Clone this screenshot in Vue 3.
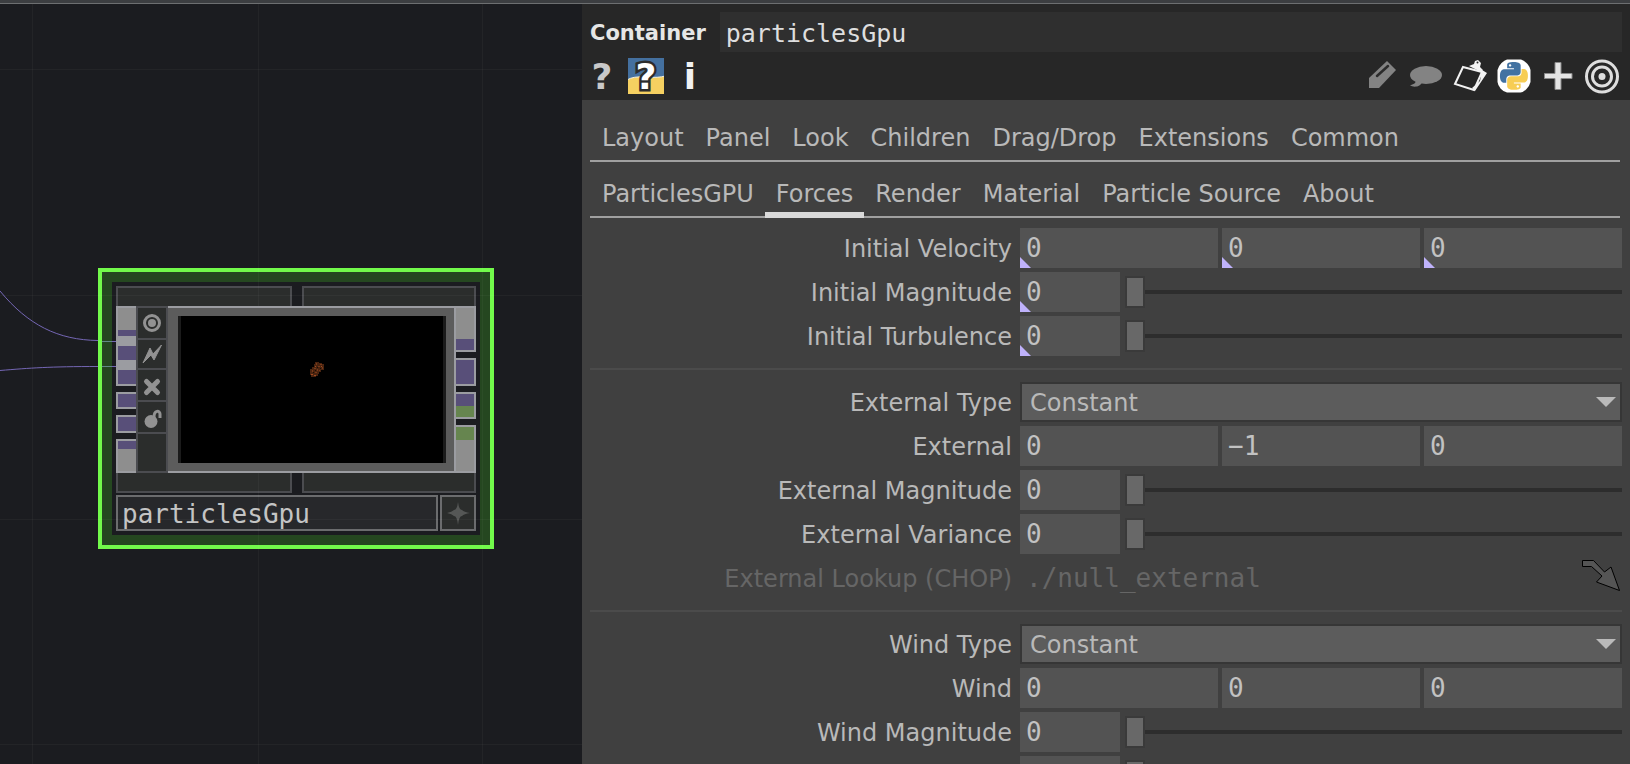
<script setup>
import { ref } from 'vue'

const pageTabs = ['Layout', 'Panel', 'Look', 'Children', 'Drag/Drop', 'Extensions', 'Common']
const customTabs = ['ParticlesGPU', 'Forces', 'Render', 'Material', 'Particle Source', 'About']
const activeTab = ref('Forces')
const opName = ref('particlesGpu')

const groups = ref([
  [
    { id: 'initvel', label: 'Initial Velocity', type: 'vector', values: ['0', '0', '0'], exported: true },
    { id: 'initmag', label: 'Initial Magnitude', type: 'slider', value: 0, exported: true },
    { id: 'initturb', label: 'Initial Turbulence', type: 'slider', value: 0, exported: true }
  ],
  [
    { id: 'exttype', label: 'External Type', type: 'menu', value: 'Constant' },
    { id: 'ext', label: 'External', type: 'vector', values: ['0', '−1', '0'] },
    { id: 'extmag', label: 'External Magnitude', type: 'slider', value: 0 },
    { id: 'extvar', label: 'External Variance', type: 'slider', value: 0 },
    { id: 'extchop', label: 'External Lookup (CHOP)', type: 'path', value: './null_external' }
  ],
  [
    { id: 'windtype', label: 'Wind Type', type: 'menu', value: 'Constant' },
    { id: 'wind', label: 'Wind', type: 'vector', values: ['0', '0', '0'] },
    { id: 'windmag', label: 'Wind Magnitude', type: 'slider', value: 0 },
    { id: 'windvar', label: 'Wind Variance', type: 'slider', value: 0 }
  ]
])

const pythonPath =
  'M14.25.18l.9.2.73.26.59.3.45.32.34.34.25.34.16.33.1.3.04.26.02.2-.01.13V8.5l-.05.63-.13.55-.21.46-.26.38-.3.31-.33.25-.35.19-.35.14-.33.1-.3.07-.26.04-.21.02H8.77l-.69.05-.59.14-.5.22-.41.27-.33.32-.27.35-.2.36-.15.37-.1.35-.07.32-.04.27-.02.21v3.06H3.17l-.21-.03-.28-.07-.32-.12-.35-.18-.36-.26-.36-.36-.35-.46-.32-.59-.28-.73-.21-.88-.14-1.05-.05-1.23.06-1.22.16-1.04.24-.87.32-.71.36-.57.4-.44.42-.33.42-.24.4-.16.36-.1.32-.05.24-.01h.16l.06.01h8.16v-.83H6.18l-.01-2.75-.02-.37.05-.34.11-.31.17-.28.25-.26.31-.23.38-.2.44-.18.51-.15.58-.12.64-.1.71-.06.77-.04.84-.02 1.27.05zm-6.3 1.98l-.23.33-.08.41.08.41.23.34.33.22.41.09.41-.09.33-.22.23-.34.08-.41-.08-.41-.23-.33-.33-.22-.41-.09-.41.09z'
</script>

<template>
  <div class="app">
    <div class="topbar"></div>
    <div class="workspace">
      <main class="network" aria-label="Network editor">
        <svg class="wires" width="582" height="760" viewBox="0 4 582 760" fill="none" aria-hidden="true">
          <path d="M0 291C28 325 58 340 98 340.500M0 370.500C30 368 50 366.500 98 366.500" stroke="#7466b4" />
        </svg>
        <section class="node" aria-label="particlesGpu node">
          <svg class="wire-ends" width="14" height="80" viewBox="0 0 14 80" aria-hidden="true">
            <path d="M0 23.500H10M0 48.500H10" stroke="#628a88" />
            <path d="M10 23.500H14M10 48.500H14" stroke="#7466b4" />
          </svg>
          <div class="slots top"><i></i><i></i></div>
          <div class="node-main">
            <svg class="conn" width="20" height="167" viewBox="0 0 20 167" aria-hidden="true">
              <path fill="#9b9ca1" d="M0 0h20v80H0zM0 86h20v17H0zM0 109h20v18H0zM0 133h20v34H0z" />
              <path fill="#8e8e8e" d="M2 2h18v22H2zM2 143h18v22H2z" />
              <path fill="#584f79" d="M2 24h18v6H2zM2 40h18v14H2zM2 64h18v14H2zM2 88h18v13H2zM2 111h18v14H2zM2 135h18v8H2z" />
            </svg>
            <div class="flags">
              <button type="button" aria-label="Viewer active">
                <svg viewBox="0 0 28 28" width="28" height="28"><circle cx="14" cy="14" r="7.500" fill="none" stroke="#929292" stroke-width="3" /><circle cx="14" cy="14" r="4" fill="#929292" /></svg>
              </button>
              <button type="button" aria-label="Bypass">
                <svg viewBox="0 0 28 28" width="28" height="28"><path fill="#929292" stroke="#929292" d="M23.500 5 16 20l-3-5-8 8 7-15 3 6z" /></svg>
              </button>
              <button type="button" aria-label="Lock cook">
                <svg viewBox="0 0 28 28" width="28" height="28"><path d="m8.500 10.500 11 11m0-11-11 11" stroke="#929292" stroke-width="5" stroke-linecap="round" /></svg>
              </button>
              <button type="button" aria-label="Lock">
                <svg viewBox="0 0 28 28" width="28" height="28"><circle cx="13" cy="18.500" r="6.500" fill="#929292" /><path d="M16 14c0-7 6-7 6-3v4" fill="none" stroke="#929292" stroke-width="3" /></svg>
              </button>
              <span></span>
            </div>
            <div class="viewer">
              <div class="screen">
                <svg class="particles" width="16" height="18" viewBox="0 0 16 18" aria-hidden="true">
                  <path fill="#4a2410" d="M6 2h4v1h3v1h2v6h-3v2h-2v2H9v2H7v1H2v-2H1V9h2V7h2V4h1z" />
                  <path fill="#7a3a18" d="M7 3h1v2H7zM11 4h2v1h-2zM9 6h2v1H9zM13 7h1v2h-1zM5 8h2v1H5zM8 9h1v2H8zM3 10h1v2H3zM6 12h2v1H6zM10 10h1v1h-1z" />
                  <path fill="#a04a22" d="M2 14h2v1H2zM5 15h2v1H5zM12 6h1v1h-1zM6 6h1v1H6z" />
                  <path fill="#1c0d05" d="M8 7h1v1H8zM4 12h1v1H4zM11 8h1v1h-1zM6 10h1v1H6z" />
                </svg>
              </div>
            </div>
            <svg class="conn" width="22" height="167" viewBox="0 0 22 167" aria-hidden="true">
              <path fill="#9b9ca1" d="M0 0h22v46H0zM0 46h2v121H0zM2 52h20v28H2zM2 86h20v27H2zM2 119h20v48H2z" />
              <path fill="#8e8e8e" d="M2 2h18v31H2zM2 134h18v31H2z" />
              <path fill="#584f79" d="M2 33h18v11H2zM2 54h18v24H2zM2 88h18v12H2z" />
              <path fill="#66854f" d="M2 100h18v11H2zM2 121h18v13H2z" />
            </svg>
          </div>
          <div class="slots bottom"><i></i><i></i></div>
          <div class="node-foot">
            <div class="node-name">particlesGpu</div>
            <button type="button" class="star" aria-label="Display flag">
              <svg viewBox="0 0 32 32" width="32" height="32"><path fill="#555756" d="M16 5Q17 13 20 13 22 15 28 16 22 17 20 19 17 19 16 28 15 19 12 19 10 17 5 16 10 15 12 13 15 13 16 5z" /></svg>
            </button>
          </div>
        </section>
        <svg class="grid" width="582" height="760" viewBox="0 4 582 760" aria-hidden="true">
          <path d="M32.500 4V764M258.500 4V764M482.500 4V764M0 69.500H582M0 295.500H582M0 519.500H582M0 744.500H582" stroke="#fff" stroke-opacity=".035" />
        </svg>
      </main>

      <aside class="params">
        <header class="head">
          <div class="title-row">
            <label for="op-name">Container</label>
            <input id="op-name" v-model="opName" type="text" spellcheck="false" />
          </div>
          <div class="tools">
            <div class="tool-set">
              <button type="button" class="glyph dim" aria-label="Help">?</button>
              <button type="button" class="glyph py" aria-label="Python help">
                <svg class="py-bg" viewBox="0 0 36 36" width="36" height="36" aria-hidden="true">
                  <path fill="#44709f" d="M0 0h36v36H0z" />
                  <path fill="#f5d061" stroke="#f4f0e0" stroke-width="1" d="M-1 22Q5 18 18 19T37 18V37H-1z" />
                </svg>
                <span>?</span>
              </button>
              <button type="button" class="glyph" aria-label="Info">i</button>
            </div>
            <div class="tool-set">
              <button type="button" aria-label="Edit">
                <svg viewBox="0 0 36 36" width="36" height="36"><path fill="#838383" d="M5 20 23 3l9 9-17 18H5z" /><path d="M13 18 24 8" stroke="#2b2b2b" stroke-width="2.500" stroke-linecap="round" /></svg>
              </button>
              <button type="button" aria-label="Comment">
                <svg viewBox="0 0 36 36" width="36" height="36"><ellipse cx="18" cy="17" rx="16" ry="9" fill="#838383" /><path fill="#838383" d="M8 20c1 5-3 7-6 7 3 3 11 2 12-3z" /></svg>
              </button>
              <button type="button" aria-label="Copy parameters">
                <svg viewBox="0 0 36 36" width="36" height="36"><path d="M11 9 30 14 22 32 3 26z" fill="#262626" stroke="#f2f2f2" stroke-width="2" /><path fill="#f2f2f2" d="m30 12 5 3-12 18-3-3 8-7zM17 8l5-2 1-3 3-1 3 3-1 4 3 3-2 2z" /><circle cx="25.500" cy="4.500" r="1" fill="#262626" /></svg>
              </button>
              <button type="button" aria-label="Python mode">
                <svg viewBox="0 0 36 36" width="36" height="36">
                  <path fill="#fff" d="M11 1.500h14q4 1.500 6.500 4.500t3 6v12q-1 4-4 7t-6 3.500H11q-4-1-6.500-4T1.500 24V12q1-4 4-7T11 1.500z" />
                  <g transform="translate(4 4) scale(1.160)"><path :d="pythonPath" fill="#4272a2" /><path :d="pythonPath" fill="#f7cd54" transform="rotate(180 12 12)" /></g>
                </svg>
              </button>
              <button type="button" aria-label="Add parameter">
                <svg viewBox="0 0 36 36" width="36" height="36"><path fill="#e4e4e4" stroke="#8a8a8a" d="M15 4.500h6v11h11v5H21v11h-6v-11H4.500v-5H15z" /></svg>
              </button>
              <button type="button" aria-label="Target">
                <svg viewBox="0 0 36 36" width="36" height="36" fill="none" stroke="#dedede" stroke-width="3"><circle cx="18" cy="18.500" r="15.500" /><circle cx="18" cy="18.500" r="9.500" /><circle cx="18" cy="18.500" r="3.500" fill="#dedede" stroke="none" /></svg>
              </button>
            </div>
          </div>
        </header>

        <div class="body">
          <nav class="tabs">
            <button v-for="t in pageTabs" :key="t" type="button" :class="{ active: t === activeTab }" @click="activeTab = t">{{ t }}</button>
          </nav>
          <nav class="tabs">
            <button v-for="t in customTabs" :key="t" type="button" :class="{ active: t === activeTab }" @click="activeTab = t">{{ t }}</button>
          </nav>

          <div class="groups">
            <section v-for="(g, gi) in groups" :key="gi" class="group">
              <div v-for="p in g" :key="p.id" class="row" :class="{ disabled: p.type === 'path' }">
                <label :for="p.id">{{ p.label }}</label>
                <div v-if="p.type === 'vector'" class="control">
                  <span v-for="(v, i) in p.values" :key="i" class="cell" :class="{ exported: p.exported }">
                    <input :id="i ? p.id + i : p.id" v-model="p.values[i]" type="text" :aria-label="p.label + ' ' + (i + 1)" />
                  </span>
                </div>
                <div v-else-if="p.type === 'slider'" class="control">
                  <span class="cell single" :class="{ exported: p.exported }">
                    <input :id="p.id" v-model="p.value" type="text" />
                  </span>
                  <input v-model="p.value" class="range" type="range" min="0" max="1" step="0.01" :aria-label="p.label + ' slider'" />
                </div>
                <div v-else-if="p.type === 'menu'" class="control menu">
                  <select :id="p.id" v-model="p.value"><option>Constant</option></select>
                  <svg width="20" height="10" viewBox="0 0 20 10" aria-hidden="true"><path fill="#bababa" d="M0 0h20L10 10z" /></svg>
                </div>
                <div v-else class="control">
                  <input :id="p.id" class="path" type="text" :value="p.value" disabled />
                  <button type="button" class="jump" aria-label="Go to operator">
                    <svg width="42" height="36" viewBox="0 0 42 36"><path fill="#555" stroke="#000" d="M2.500 2.500h11l11 11.500 6.500-5 8.500 23.500-23-8.500 5.500-6L11.500 8.500h-9z" /></svg>
                  </button>
                </div>
              </div>
            </section>
          </div>
        </div>
      </aside>
    </div>
  </div>
</template>

<style>
body {
  background: #1b1c20;
}
</style>

<style scoped>
.app {
  display: flex;
  flex-direction: column;
  height: 100vh;
  overflow: hidden;
  font-family: Verdana, "DejaVu Sans", sans-serif;
  font-size: 24px;
  line-height: 28px;
  color: #b9b9b9;
}
.app * {
  box-sizing: border-box;
}
button,
input,
select {
  margin: 0;
  padding: 0;
  border: 0;
  border-radius: 0;
  outline: 0;
  background: none;
  color: inherit;
  font: inherit;
  appearance: none;
}
button {
  cursor: pointer;
}
svg {
  display: block;
}
.topbar {
  flex: none;
  height: 4px;
  background: #3c3e41;
  border-bottom: 1px solid #6d6f71;
}
.workspace {
  display: flex;
  flex: 1;
  min-height: 0;
}

.network {
  position: relative;
  flex: 582 1 0;
  min-width: 0;
  overflow: hidden;
  background: #1b1c20;
}
.wires,
.grid {
  position: absolute;
  top: 0;
  left: 0;
  pointer-events: none;
}
.node {
  position: absolute;
  left: 98px;
  top: 264px;
  display: flex;
  flex-direction: column;
  width: 396px;
  padding: 14px;
  border: 4px solid #72fa4b;
  background: #1b1c20;
  box-shadow: inset 0 0 0 10px #254720;
}
.wire-ends {
  position: absolute;
  left: 0;
  top: 46px;
}
.slots {
  display: flex;
  gap: 10px;
  height: 20px;
}
.slots i {
  flex: 1;
  border: 2px solid #4b4c50;
  background: #2b2d2c;
}
.slots i:first-child {
  flex: 0 0 176px;
}
.slots.top i {
  border-bottom: 0;
}
.slots.bottom i {
  border-top: 0;
}
.node-main {
  display: flex;
  height: 167px;
}
.conn {
  flex: none;
}
.flags {
  display: grid;
  grid-template-rows: 30px 28px 30px 30px 1fr;
  gap: 2px;
  width: 32px;
  flex: none;
  padding: 2px;
  background: #4b4c50;
}
.flags button,
.flags span {
  display: flex;
  align-items: center;
  justify-content: center;
  background: #2b2d2c;
}
.viewer {
  z-index: 1;
  flex: 1;
  padding: 8px 8px 8px 10px;
  border: solid #9b9ca1;
  border-width: 2px 0;
  background: #5c5c5c;
}
.screen {
  position: relative;
  height: 100%;
  border: solid #1b1b1b;
  border-width: 0 3px;
  background: #000;
}
.particles {
  position: absolute;
  left: 49%;
  top: 44px;
}
.node-foot {
  display: flex;
  gap: 2px;
  margin-top: 2px;
}
.node-name {
  flex: 1;
  height: 36px;
  padding-left: 4px;
  border: 2px solid #6b6c6e;
  background: #27282b;
  color: #c4c4c4;
  font-family: "DejaVu Sans Mono", monospace;
  font-size: 26px;
  line-height: 34px;
}
.star {
  width: 36px;
  height: 36px;
  border: 2px solid #6b6c6e;
  background: #2b2d2c;
}

.params {
  display: flex;
  flex-direction: column;
  flex: 1048 1 0;
  min-width: 0;
  background: #404040;
}
.head {
  flex: none;
  height: 96px;
  padding-top: 8px;
  background: #272727;
}
.title-row {
  display: flex;
  align-items: center;
  gap: 14px;
  padding: 0 8px;
}
.title-row label {
  padding-top: 2px;
  color: #e6e6e6;
  font-size: 21px;
  font-weight: bold;
}
.title-row input {
  flex: 1;
  min-width: 0;
  height: 40px;
  padding: 2px 0 0 6px;
  background: #2f2f2f;
  color: #dedede;
  font-family: "DejaVu Sans Mono", monospace;
  font-size: 25px;
}
.tools {
  display: flex;
  justify-content: space-between;
  padding: 6px 10px 0 2px;
}
.tool-set {
  display: flex;
  gap: 8px;
}
.tool-set button {
  position: relative;
  width: 36px;
  height: 36px;
}
.tool-set .glyph {
  color: #f2f2f2;
  font-size: 36px;
  font-weight: bold;
  line-height: 38px;
}
.tool-set .dim {
  color: #c8c8c8;
}
.py-bg {
  position: absolute;
  left: 0;
  top: 0;
}
.py span {
  position: relative;
  color: #fff;
  -webkit-text-stroke: 5px #2c2c2c;
  paint-order: stroke fill;
}

.body {
  flex: 1;
  min-height: 0;
  padding: 6px 8px 0;
  overflow: hidden;
}
.tabs {
  display: flex;
  margin-right: 2px;
  padding-left: 1px;
  border-bottom: 2px solid #a0a0a0;
}
.tabs button {
  position: relative;
  height: 54px;
  padding: 10px 11px 0;
  white-space: nowrap;
}
.tabs .active::after {
  content: "";
  position: absolute;
  left: 0;
  right: 0;
  bottom: -2px;
  height: 6px;
  background: #d9d9d9;
}
.groups {
  padding-top: 10px;
}
.group {
  display: flex;
  flex-direction: column;
  gap: 4px;
}
.group + .group {
  margin-top: 12px;
  padding-top: 12px;
  border-top: 2px solid #4b4b4b;
}
.row {
  display: grid;
  grid-template-columns: minmax(0, 422fr) minmax(0, 602fr);
  gap: 8px;
  align-items: center;
}
.row label {
  padding-top: 2px;
  text-align: right;
  white-space: nowrap;
}
.control {
  position: relative;
  display: flex;
  gap: 4px;
  height: 40px;
}
.cell {
  position: relative;
  flex: 1;
  min-width: 0;
}
.cell.single {
  flex: 0 0 100px;
}
.cell input {
  width: 100%;
  height: 40px;
  padding-left: 6px;
  background: #535353;
  color: #c2c2c2;
  font-family: "DejaVu Sans Mono", monospace;
  font-size: 26px;
}
.cell.exported::after {
  content: "";
  position: absolute;
  left: 0;
  bottom: 0;
  width: 11px;
  height: 11px;
  background: #bfb2fb;
  clip-path: polygon(0 0, 100% 100%, 0 100%);
}
.range {
  flex: 1;
  min-width: 0;
  height: 40px;
  margin-left: 1px;
}
.range::-webkit-slider-runnable-track {
  height: 4px;
  background: #2d2d2d;
}
.range::-webkit-slider-thumb {
  width: 20px;
  height: 32px;
  margin-top: -14px;
  border: 2px solid #3a3a3a;
  background: #686868;
  appearance: none;
}
.menu select {
  width: 100%;
  height: 40px;
  padding: 2px 0 0 8px;
  border: 2px solid #363636;
  background: #5c5c5c;
}
.menu svg {
  position: absolute;
  right: 6px;
  top: 15px;
  pointer-events: none;
}
.path {
  flex: 1;
  min-width: 0;
  height: 40px;
  padding-left: 6px;
  font-family: "DejaVu Sans Mono", monospace;
  font-size: 26px;
}
.jump {
  height: 36px;
}
.disabled {
  color: #666;
}
</style>
